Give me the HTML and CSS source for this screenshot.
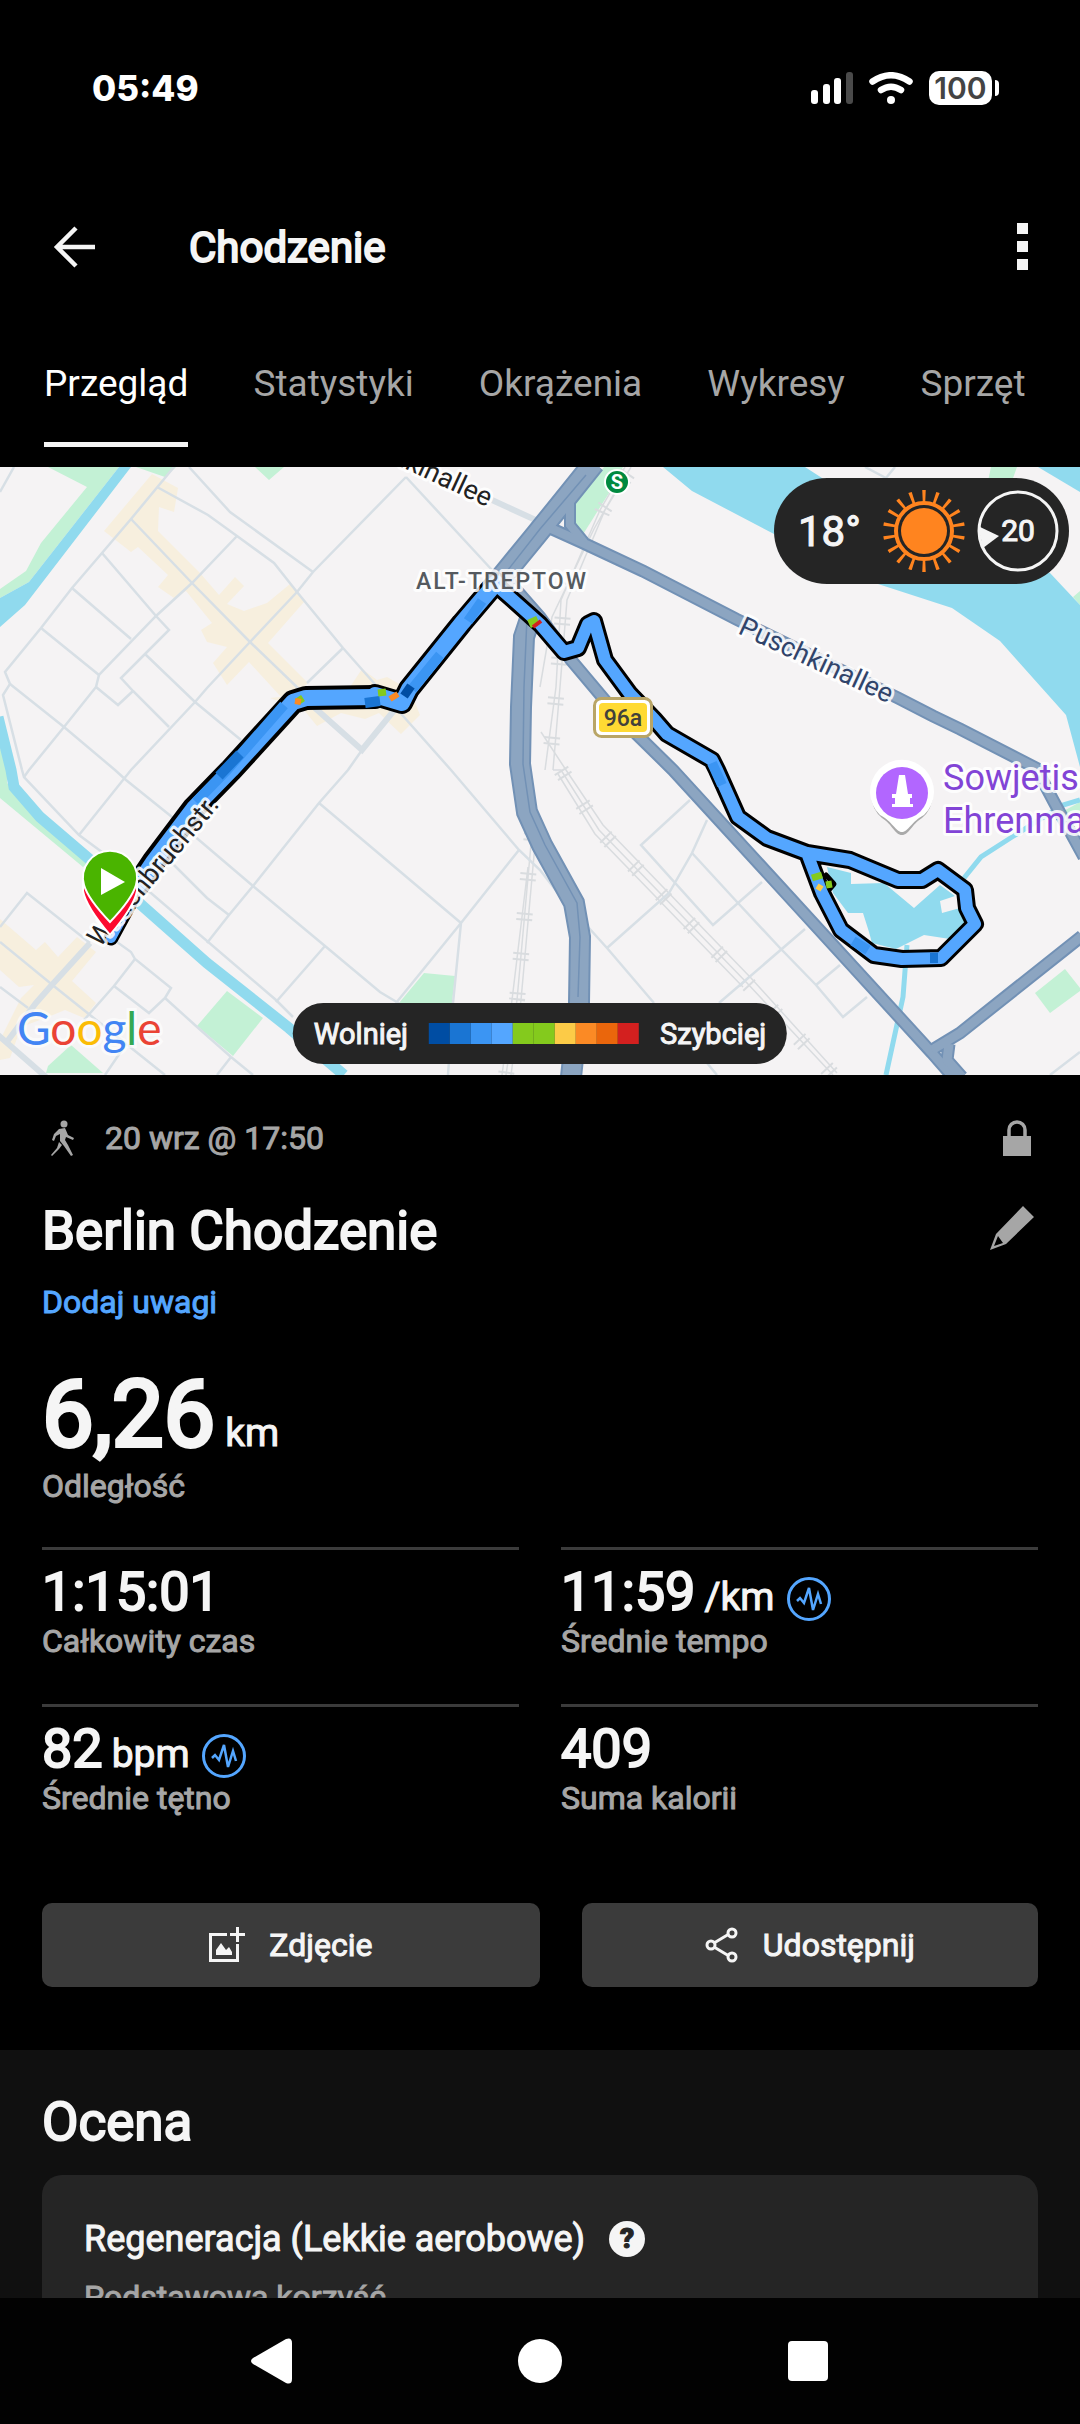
FILE: index.html
```html
<!DOCTYPE html>
<html lang="pl">
<head>
    <meta charset="UTF-8">
    <meta name="viewport" content="width=device-width, initial-scale=1.0">
    <title>Chodzenie</title>
    <link rel="stylesheet" href="styles.css">
</head>
<body>
    <div class="statusbar">
        <span class="clock">05:49</span>
        <div class="status-icons">
            <svg width="42" height="32" viewBox="0 0 42 32">
                <rect x="0" y="18" width="7" height="14" rx="3" fill="#fff"/>
                <rect x="12" y="12" width="7" height="20" rx="3" fill="#fff"/>
                <rect x="23" y="6" width="7" height="26" rx="3" fill="#fff"/>
                <rect x="35" y="0" width="7" height="32" rx="3" fill="#4a4a4a"/>
            </svg>
            <svg width="44" height="32" viewBox="0 0 44 32" fill="none" stroke="#fff" stroke-linecap="round">
                <path d="M3.500 9.500Q22 -3 40.500 9.500" stroke-width="6.500"/>
                <path d="M12 18Q22 11.500 32 18" stroke-width="6.500"/>
                <circle cx="22" cy="28" r="4" fill="#fff" stroke="none"/>
            </svg>
            <div class="battery">100</div>
        </div>
    </div>

    <header class="appbar">
        <button class="icon-button" aria-label="Wstecz">
            <svg width="42" height="42" viewBox="0 0 42 42" fill="none" stroke="#f5f5f5" stroke-width="4.500">
                <path d="M42 21H4M23 2L4 21L23 40"/>
            </svg>
        </button>
        <h1 class="appbar-title">Chodzenie</h1>
        <button class="icon-button" aria-label="Więcej">
            <svg width="12" height="48" viewBox="0 0 12 48" fill="#f5f5f5">
                <path d="M0 0h11v11H0zM0 18h11v11H0zM0 36h11v11H0z"/>
            </svg>
        </button>
    </header>

    <nav class="tabs">
        <a class="tab active" href="#przeglad">Przegląd</a>
        <a class="tab" href="#statystyki">Statystyki</a>
        <a class="tab" href="#okrazenia">Okrążenia</a>
        <a class="tab" href="#wykresy">Wykresy</a>
        <a class="tab" href="#sprzet">Sprzęt</a>
    </nav>

    <main class="content">
        <div class="map">
            <svg class="map-canvas" viewBox="0 0 1080 608">
                <rect width="1080" height="608" fill="#f5f3f4"/>

                <!-- parks -->
                <g fill="#c3f1d5">
                    <path d="M48 0L87 20L41 76L26 104L0 122V131L29 115L119 0Z"/>
                    <path d="M136 0L165 10L176 0ZM255 0L269 13L284 0Z"/>
                    <path d="M604 0H623L609 26L582 69L574 56L576 36Z"/>
                    <path d="M991 0H1017L1012 14H988ZM1080 124L1073 130L1080 138Z"/>
                    <path d="M0 280L7 303V316L21 330L45 353L88 396L83 400L0 331Z"/>
                    <path d="M227 524L263 551L233 589L197 559Z"/>
                    <path d="M424 506L455 509L452 536H399Z"/>
                    <path d="M71 578L103 606H46L48 599Z"/>
                    <path d="M1080 335L1060 346H1080ZM1065 502L1080 521V524L1050 546L1035 526Z"/>
                </g>

                <!-- built-up areas -->
                <g fill="#f7efde">
                    <path d="M152 7L178 21L174 45L159 40L158 64L200 106L219 128L235 110L244 119L227 137L244 144L267 136L290 117L304 135L268 176L308 216L300 223L282 231L249 195L227 218L213 196L227 180L207 175L201 163L212 156L186 124L174 131L158 120L168 108L138 80L131 85L104 64Z"/>
                    <path d="M362 202L377 213L387 210L410 223L420 248L401 267L379 246L365 252L341 246L317 259L304 243L270 231L348 223Z"/>
                    <path d="M0 452L36 483L45 475L58 490L77 470L96 485L72 514L96 536L84 551L65 543L48 550L21 560L10 591L0 593V573L21 531L34 518L19 520L0 503Z"/>
                </g>

                <!-- water -->
                <g fill="#90daee">
                    <path d="M119 0H131L25 138L0 160V131L29 115Z"/>
                    <path d="M663 0L692 24L774 67L878 117L952 141L1000 174L1066 248L1080 300V138L1050 106L822 11L805 0Z"/>
                    <path d="M1038 0L1080 25V0Z"/>
                    <path d="M827 400L851 406V417L884 416L914 441L940 418L955 429L940 434L942 446L960 441L965 456L950 472L924 468L896 482L872 476L869 465L863 446H848L833 426Z"/>
                </g>
                <g fill="none" stroke="#90daee">
                    <path stroke-width="11" d="M-2 250L11 303L14 320L40 350L88 391L138 435L207 496L289 561L344 608"/>
                    <path stroke-width="5" d="M907 478L903 530L886 608M1080 333L1063 338L1012 370L981 390L964 411"/>
                </g>

                <!-- railway -->
                <g fill="none" stroke="#d9dcdf">
                    <g stroke-width="1.500">
                        <path d="M631 0L605 43L567 133L560 220L553 303M625 0L600 43L561 133L556 220L545 303M619 18L594 62L552 150L540 220"/>
                        <path d="M553 303L561 303L599 363L747 516L833 608M541 265L566 303L603 358L751 511L837 606M558 307L595 367L743 520"/>
                        <path d="M532 366L517 533L506 608M536 366L521 533L511 608M528 400L512 533L502 608"/>
                    </g>
                    <g stroke-width="16" stroke-dasharray="2 4 2 32">
                        <path d="M628 6L603 43L564 133L557 220L549 303"/>
                        <path d="M561 303L599 363L747 516L833 608"/>
                        <path d="M532 366L517 533L506 608"/>
                    </g>
                </g>

                <!-- streets -->
                <g fill="none" stroke="#d7dfe5" stroke-width="2.500">
                    <path d="M174 0L131 52L102 86L72 121L41 161L5 205L10 217L3 228L22 303L24 310L79 368L110 391L276 533L293 550"/>
                    <path d="M157 20L208 48L237 69L274 96L297 125L343 181L396 241L451 303L519 383L540 403L561 430L607 481L654 536"/>
                    <path d="M189 0L230 45L313 105M406 10L313 105L297 125L250 175L207 221L195 235L131 303L79 368M406 10L492 103"/>
                    <path d="M131 52L192 116L250 175L300 223M237 69L192 116L156 149L99 208L96 220L64 260L29 303L24 310"/>
                    <path d="M102 86L156 149L169 163L145 187L121 211L133 224L169 260M72 121L131 172M41 161L99 208M96 220L118 238L133 224"/>
                    <path d="M10 217L64 260L115 303L126 313L172 350L253 419L325 479L380 525L400 537M145 187L195 235L241 273M343 181L307 216"/>
                    <path d="M362 283L348 303L319 336L253 419L229 448L207 476M14 0L0 25M172 396L207 431L229 448"/>
                    <path d="M319 336L461 456M519 383L461 456L396 536M461 456L453 536L448 608M325 479L276 535"/>
                    <path d="M0 460L27 426L90 476M110 470L131 485L135 492L171 521L165 531L149 546L114 519L135 492M114 519L84 553"/>
                    <path d="M165 531L196 559L231 590L253 608M231 590L217 608M0 475L55 520L90 548L165 608M0 520L28 541M124 580L105 608"/>
                    <path d="M865 0L886 11L895 0M690 333L641 378L713 458L762 415M707 353L692 386L669 426L607 481"/>
                    <path d="M692 386L738 436L781 482L816 518L843 550L867 530M805 462L719 536M840 498L816 518M707 596L717 608M1050 608L1080 585"/>
                </g>
                <g fill="none" stroke="#d7dfe5" stroke-width="6">
                    <path d="M315 241L362 283L396 241M492 33L540 55M90 476L50 520L36 536L6 576M-2 568L46 610"/>
                </g>

                <!-- main roads: casing first, then fill -->
                <g fill="none" stroke="#7291b5">
                    <path stroke-width="13" d="M550 61L581 75L643 104L736 152L898 231L933 249L960 262L1036 301L1054 335L1084 390"/>
                    <path stroke-width="13" d="M505 110L540 150L571 193L619 250L673 303L932 586L953 610"/>
                    <path stroke-width="13" d="M1082 469L960 566L932 583M949 577L947 593L962 610"/>
                    <path stroke-width="23" d="M594 -4L570 26L536 68L500 112"/>
                    <path stroke-width="22" d="M533 143L524 170L521 240L520 297L527 345L542 378L574 436L580 470L579 536L571 610"/>
                    <path stroke-width="12" d="M570 30V58L584 75"/>
                </g>
                <g fill="none" stroke="#8ca5c1">
                    <path stroke-width="9" d="M550 61L581 75L643 104L736 152L898 231L933 249L960 262L1036 301L1054 335L1084 390"/>
                    <path stroke-width="9" d="M505 110L540 150L571 193L619 250L673 303L932 586L953 610"/>
                    <path stroke-width="9" d="M1082 469L960 566L932 583M949 577L947 593L962 610"/>
                    <path stroke-width="19" d="M594 -4L570 26L536 68L500 112"/>
                    <path stroke-width="18" d="M533 143L524 170L521 240L520 297L527 345L542 378L574 436L580 470L579 536L571 610"/>
                    <path stroke-width="8" d="M570 30V58L584 75"/>
                </g>
                <path d="M586 8L540 62L504 108M527 150L524 220L523 297L530 345L545 378L577 436L580 470L578 530" fill="none" stroke="#7291b5" stroke-width="1.500"/>

                <!-- recorded track -->
                <g fill="none" stroke-linejoin="round" stroke-linecap="round">
                    <path stroke="#000" stroke-width="15" d="M111 471L130 436"/>
                    <path stroke="#000" stroke-width="24" d="M138 418L154 394L194 341L231 303L293 235L306 231L375 230"/>
                    <path stroke="#000" stroke-width="22" d="M375 228L402 236L409 222L462 156L496 116"/>
                    <path stroke="#000" stroke-width="18" d="M496 118L512 132L540 157L564 185L578 181L588 157L594 154L605 193L630 227L654 252L667 267L712 293L717 303L738 350L767 371L807 386L850 393L898 413H922L938 403L965 423L967 441L975 457L941 491L902 492L874 488L841 463L822 426L807 386"/>
                    <path stroke="#000" stroke-width="5" d="M826 408L834 417L828 424"/>
                    <path stroke="#54a6ff" stroke-width="10" d="M111 471L130 436"/>
                    <path stroke="#54a6ff" stroke-width="16" d="M138 418L154 394L194 341L231 303L293 235L306 231L375 230"/>
                    <path stroke="#54a6ff" stroke-width="16" d="M375 228L402 236L409 222L462 156L496 116"/>
                    <path stroke="#54a6ff" stroke-width="12" d="M496 118L512 132L540 157L564 185L578 181L588 157L594 154L605 193L630 227L654 252L667 267L712 293L717 303L738 350L767 371L807 386L850 393L898 413H922L938 403L965 423L967 441L975 457L941 491L902 492L874 488L841 463L822 426L807 386"/>
                </g>
                <g fill="none">
                    <path stroke="#3b95f3" stroke-width="10" d="M196 335L227 303L284 238M412 222L440 188M468 154L482 134M712 296L722 318M853 474L868 483"/>
                    <path stroke="#1a75d3" stroke-width="10" d="M219 309L240 287M365 236L380 234M930 491L938 491"/>
                    <path stroke="#004da3" stroke-width="9" d="M404 229L411 219"/>
                    <path stroke="#84ca1d" stroke-width="7" d="M378 226L386 225M297 235L303 231M812 411L822 408M826 418L832 417"/>
                    <path stroke="#84ca1d" stroke-width="9" d="M529 157L538 153"/>
                    <path stroke="#fb8a25" stroke-width="6" d="M390 232L398 227M295 234L301 235"/>
                    <path stroke="#d3201f" stroke-width="4" d="M533 160L541 154"/>
                    <path stroke="#fccb47" stroke-width="6" d="M817 419L822 422"/>
                </g>

                <!-- labels -->
                <g class="map-label">
                    <text transform="translate(737 166) rotate(25)" font-size="27" fill="#30446b">Puschkinallee</text>
                    <text transform="translate(487 40) rotate(25)" font-size="27" fill="#222" text-anchor="end">Puschkinallee</text>
                    <text transform="translate(220 338) rotate(-50)" font-size="27" fill="#222" text-anchor="end">Wildenbruchstr.</text>
                    <text class="district" x="416" y="122" font-size="23" fill="#555a5f">ALT-TREPTOW</text>
                    <text x="943" y="323" font-size="36" fill="#8244d6">Sowjetisches</text>
                    <text x="943" y="366" font-size="36" fill="#8244d6">Ehrenmal</text>
                </g>

                <g>
                    <rect x="594.500" y="231.500" width="57" height="38" rx="7" fill="#fff" stroke="#b9a566" stroke-width="3"/>
                    <rect x="599" y="236" width="48" height="29" rx="4" fill="#ffda33"/>
                    <text class="sign" x="623" y="259" font-size="23" fill="#42413b" text-anchor="middle">96a</text>
                </g>
                <g>
                    <circle cx="617" cy="15" r="13" fill="#fff"/>
                    <circle cx="617" cy="15" r="11" fill="#00893f"/>
                    <text class="sbahn" x="617" y="22" font-size="20" fill="#fff" text-anchor="middle">S</text>
                </g>

                <!-- memorial pin -->
                <path d="M902 368C895 368 892 357 882 351A31 31 0 1 1 922 351C912 357 909 368 902 368Z" fill="#aaa"/>
                <path d="M902 365C896 365 892 354 880 348A32 32 0 1 1 924 348C912 354 908 365 902 365Z" fill="#fff"/>
                <circle cx="902" cy="326" r="26" fill="#b266ff"/>
                <path d="M899 308H905L908 327H912V331H910V337H913V340H892V337H895V331H892V327H896Z" fill="#fff"/>

                <!-- stop and start pins -->
                <path d="M110 468Q86 440 83 424V415H137V424Q134 440 110 468Z" fill="#fc0a30" stroke="#fff" stroke-width="2"/>
                <path d="M110 455Q88 432 84 418A27 27 0 1 1 136 418Q132 432 110 455Z" fill="#4ab400" stroke="#fff" stroke-width="2"/>
                <path d="M101 401L125 415L101 428Z" fill="#fff"/>

                <text class="logo" x="17" y="578" font-size="46"><tspan fill="#4285f4">G</tspan><tspan fill="#ea4335">o</tspan><tspan fill="#fbbc05">o</tspan><tspan fill="#4285f4">g</tspan><tspan fill="#34a853">l</tspan><tspan fill="#ea4335">e</tspan></text>
            </svg>

            <div class="weather">
                <span class="temperature">18°</span>
                <svg width="82" height="82" viewBox="-41 -41 82 82" fill="none" stroke="#ff841f">
                    <circle r="23" fill="#ff841f" stroke="none"/>
                    <circle r="28" stroke-width="4"/>
                    <circle r="35" stroke-width="12" pathLength="180" stroke-dasharray="2.500 7.500" stroke-dashoffset="6.250"/>
                </svg>
                <div class="wind">
                    <svg width="82" height="82" viewBox="0 0 82 82">
                        <circle cx="41" cy="41" r="39" fill="none" stroke="#f5f5f5" stroke-width="3"/>
                        <path d="M1 36L22 46L6 58Z" fill="#f5f5f5"/>
                    </svg>
                    <span class="wind-speed">20</span>
                </div>
            </div>

            <div class="legend">
                <span>Wolniej</span>
                <div class="legend-scale">
                    <i class="pace-1"></i><i class="pace-2"></i><i class="pace-3"></i><i class="pace-4"></i><i class="pace-5"></i><i class="pace-5"></i><i class="pace-6"></i><i class="pace-7"></i><i class="pace-8"></i><i class="pace-9"></i>
                </div>
                <span>Szybciej</span>
            </div>
        </div>

        <section class="summary">
            <div class="meta">
                <svg width="24" height="36" viewBox="0 0 24 36" fill="#a6a6a6">
                    <circle cx="13" cy="4" r="3.500"/>
                    <path d="M8 9L14 8L17 15L23 18L22 20L15 17L14 20L17 25L22 35L20 36L13 26L9 21L9 14L5 16L3 21L1 20L3 14Z"/>
                    <path d="M8 22L11 25L8 29L1 36L0 35L6 28Z"/>
                </svg>
                <span class="date">20 wrz @ 17:50</span>
                <svg class="lock" width="28" height="36" viewBox="0 0 28 36">
                    <path d="M6 18V10a8 8 0 0 1 16 0V18" fill="none" stroke="#a6a6a6" stroke-width="3.500"/>
                    <rect y="16" width="28" height="20" fill="#a6a6a6"/>
                </svg>
            </div>

            <div class="title-row">
                <h2 class="title">Berlin Chodzenie</h2>
                <button class="icon-button" aria-label="Edytuj">
                    <svg width="44" height="50" viewBox="0 0 44 50" fill="#a6a6a6">
                        <path d="M33 0L44 11L16 38L0 44L6 28ZM8 30L4 40L13 37Z" fill-rule="evenodd"/>
                    </svg>
                </button>
            </div>
            <a class="notes" href="#uwagi">Dodaj uwagi</a>

            <div class="distance">
                <span class="big">6,26</span>
                <span class="unit">km</span>
            </div>
            <div class="label">Odległość</div>

            <div class="stats">
                <div class="stat">
                    <div class="value">1:15:01</div>
                    <div class="label">Całkowity czas</div>
                </div>
                <div class="stat">
                    <div class="value">11:59 <span class="unit">/km</span>
                        <svg class="pulse" width="44" height="44" viewBox="0 0 44 44" fill="none" stroke="#54a6ff"><circle cx="22" cy="22" r="20.500" stroke-width="3"/><path d="M10 24L13 21L17 26L22 11L26 33L31 17L34 27" stroke-width="2.500"/></svg>
                    </div>
                    <div class="label">Średnie tempo</div>
                </div>
                <div class="stat">
                    <div class="value">82 <span class="unit">bpm</span>
                        <svg class="pulse" width="44" height="44" viewBox="0 0 44 44" fill="none" stroke="#54a6ff"><circle cx="22" cy="22" r="20.500" stroke-width="3"/><path d="M10 24L13 21L17 26L22 11L26 33L31 17L34 27" stroke-width="2.500"/></svg>
                    </div>
                    <div class="label">Średnie tętno</div>
                </div>
                <div class="stat">
                    <div class="value">409</div>
                    <div class="label">Suma kalorii</div>
                </div>
            </div>

            <div class="actions">
                <button class="action">
                    <svg width="36" height="36" viewBox="0 0 36 36" fill="#f5f5f5">
                        <path d="M0 6H18V9H3V32H27V17H30V35H0Z"/>
                        <path d="M27 0H30V6H36V9H30V15H27V9H21V6H27Z"/>
                        <path d="M7 28V23L12 16L17 23L20 20L23 25V28Z"/>
                    </svg>
                    Zdjęcie
                </button>
                <button class="action">
                    <svg width="34" height="36" viewBox="0 0 34 36" fill="none" stroke="#f5f5f5" stroke-width="3">
                        <path d="M9 16L24 7M9 20L24 29"/>
                        <circle cx="6" cy="18" r="4"/><circle cx="27" cy="6" r="4"/><circle cx="27" cy="30" r="4"/>
                    </svg>
                    Udostępnij
                </button>
            </div>
        </section>

        <section class="rating">
            <h2 class="title">Ocena</h2>
            <div class="card">
                <div class="card-title">
                    <h3>Regeneracja (Lekkie aerobowe)</h3>
                    <button class="help" aria-label="Pomoc">?</button>
                </div>
                <div class="label">Podstawowa korzyść</div>
            </div>
        </section>
    </main>

    <footer class="navbar">
        <button class="icon-button" aria-label="Cofnij">
            <svg width="46" height="46" viewBox="0 0 46 46" fill="#fff"><path d="M4 20L37 1Q43 -1 43 5V41Q43 47 37 45L4 26Q0 23 4 20Z"/></svg>
        </button>
        <button class="icon-button" aria-label="Ekran główny">
            <svg width="46" height="46" viewBox="0 0 46 46" fill="#fff"><circle cx="23" cy="23" r="22"/></svg>
        </button>
        <button class="icon-button" aria-label="Ostatnie">
            <svg width="46" height="46" viewBox="0 0 46 46" fill="#fff"><rect x="3" y="3" width="40" height="40" rx="4"/></svg>
        </button>
    </footer>
</body>
</html>
```
FILE: styles.css
```css
* {
    box-sizing: border-box;
}

body {
    margin: 0;
    height: 100vh;
    display: flex;
    flex-direction: column;
    background-color: #000;
    color: #f5f5f5;
    font-family: Roboto, "Noto Sans", sans-serif;
    overflow: hidden;
}

h1, h2, h3 {
    margin: 0;
    font-weight: 400;
}

svg {
    display: block;
    flex-shrink: 0;
}

button {
    border: none;
    padding: 0;
    color: inherit;
    font: inherit;
    cursor: pointer;
}

a {
    text-decoration: none;
}

/* thickened regular weight */
.appbar-title,
.legend,
.temperature,
.wind-speed,
.meta,
.title,
.notes,
.label,
.value,
.unit,
.action,
.card-title {
    -webkit-text-stroke: 1px currentColor;
}

.icon-button {
    background: none;
}

.statusbar {
    display: flex;
    align-items: center;
    justify-content: space-between;
    height: 176px;
    padding: 0 80px 0 92px;
    flex-shrink: 0;
}

.clock {
    font-family: Inter, sans-serif;
    font-size: 35px;
    font-weight: 800;
    color: #fff;
}

.status-icons {
    display: flex;
    align-items: center;
    gap: 16px;
}

.battery {
    position: relative;
    width: 63px;
    height: 34px;
    margin-right: 8px;
    border-radius: 10px;
    background-color: #fff;
    color: #444;
    font-family: Inter, sans-serif;
    font-size: 30px;
    font-weight: 600;
    line-height: 34px;
    text-align: center;
}

.battery::after {
    content: "";
    position: absolute;
    right: -7px;
    top: 9px;
    width: 4px;
    height: 16px;
    border-radius: 0 4px 4px 0;
    background-color: #fff;
}

.appbar {
    display: flex;
    align-items: center;
    height: 142px;
    padding: 0 51px 0 53px;
    flex-shrink: 0;
}

.appbar-title {
    flex: 1;
    padding-left: 94px;
    font-size: 42px;
    -webkit-text-stroke-width: 2px;
}

.tabs {
    display: flex;
    justify-content: space-between;
    height: 149px;
    padding: 32px 44px 0;
    flex-shrink: 0;
}

.tab {
    min-width: 126px;
    height: 97px;
    color: #a6a6a6;
    font-size: 37px;
    line-height: 68px;
    text-align: center;
}

.tab.active {
    color: #fff;
    border-bottom: 5px solid #f5f5f5;
}

.content {
    flex: 1;
    min-height: 0;
    overflow: hidden;
}

.map {
    position: relative;
}

.map-canvas {
    width: 100%;
    height: auto;
}

.map-label text {
    paint-order: stroke;
    stroke: #fff;
    stroke-opacity: 0.85;
    stroke-width: 6px;
    stroke-linejoin: round;
}

.district {
    letter-spacing: 2px;
    font-weight: 500;
}

.sign {
    font-weight: 500;
}

.sbahn {
    font-weight: 700;
}

.logo {
    font-family: Lato, sans-serif;
    paint-order: stroke;
    stroke: #fff;
    stroke-opacity: 0.6;
    stroke-width: 6px;
}

.weather {
    position: absolute;
    top: 11px;
    right: 11px;
    display: flex;
    align-items: center;
    gap: 12px;
    width: 295px;
    height: 106px;
    padding: 0 10px 0 24px;
    border-radius: 53px;
    background-color: #252525;
}

.temperature {
    flex: 1;
    font-size: 42px;
}

.wind {
    position: relative;
}

.wind-speed {
    position: absolute;
    inset: 0;
    font-size: 30px;
    line-height: 82px;
    text-align: center;
}

.legend {
    position: absolute;
    bottom: 11px;
    left: 50%;
    transform: translateX(-50%);
    display: flex;
    align-items: center;
    gap: 21px;
    height: 61px;
    padding: 0 21px;
    border-radius: 31px;
    background-color: #252525;
    font-size: 29px;
}

.legend-scale {
    display: flex;
}

.legend-scale i {
    width: 21px;
    height: 21px;
}

.pace-1 { background-color: #004da3; }
.pace-2 { background-color: #1a75d3; }
.pace-3 { background-color: #3b95f3; }
.pace-4 { background-color: #54a6ff; }
.pace-5 { background-color: #84ca1d; }
.pace-6 { background-color: #fccb47; }
.pace-7 { background-color: #fb8a25; }
.pace-8 { background-color: #ea660c; }
.pace-9 { background-color: #d3201f; }

.summary {
    padding: 42px 42px 63px;
}

.meta {
    display: flex;
    align-items: center;
    height: 42px;
    padding: 0 7px 0 9px;
    color: #a6a6a6;
    font-size: 32px;
}

.date {
    padding-left: 30px;
}

.lock {
    margin-left: auto;
}

.title-row {
    display: flex;
    align-items: center;
    justify-content: space-between;
    padding-right: 4px;
    margin-top: 36px;
}

.title {
    font-size: 53px;
    line-height: 72px;
    -webkit-text-stroke-width: 2px;
}

.notes {
    display: block;
    margin-top: 15px;
    color: #54a6ff;
    font-size: 32px;
    line-height: 40px;
}

.distance {
    display: flex;
    align-items: baseline;
    gap: 10px;
    height: 106px;
    margin-top: 38px;
}

.big {
    font-size: 92px;
    line-height: 110px;
    -webkit-text-stroke: 4px currentColor;
}

.unit {
    font-size: 39px;
}

.label {
    color: #a6a6a6;
    font-size: 32px;
    line-height: 40px;
}

.stats {
    display: grid;
    grid-template-columns: 1fr 1fr;
    column-gap: 42px;
    margin-top: 41px;
}

.stat {
    height: 157px;
    padding-top: 11px;
    border-top: 3px solid #3b3b3b;
}

.value {
    display: flex;
    align-items: baseline;
    height: 60px;
    font-size: 54px;
    line-height: 62px;
    -webkit-text-stroke-width: 2px;
}

.value .unit {
    padding-left: 9px;
    -webkit-text-stroke-width: 1px;
}

.pulse {
    margin-left: 12px;
    align-self: flex-end;
}

.actions {
    display: grid;
    grid-template-columns: 12fr 11fr;
    gap: 42px;
    margin-top: 42px;
}

.action {
    display: flex;
    align-items: center;
    justify-content: center;
    gap: 24px;
    height: 84px;
    border-radius: 10px;
    background-color: #3b3b3b;
    font-size: 32px;
}

.rating {
    padding: 36px 42px 0;
    background-color: #101010;
}

.card {
    margin-top: 17px;
    padding: 42px 42px 60px;
    border-radius: 20px;
    background-color: #252525;
}

.card-title {
    display: flex;
    align-items: center;
    gap: 24px;
    margin-bottom: 16px;
}

.card-title h3 {
    font-size: 36px;
    line-height: 44px;
}

.help {
    width: 36px;
    height: 36px;
    border-radius: 50%;
    background-color: #f5f5f5;
    color: #252525;
    font-size: 28px;
    font-weight: 900;
    line-height: 36px;
}

.navbar {
    display: flex;
    align-items: center;
    justify-content: center;
    gap: 222px;
    height: 126px;
    flex-shrink: 0;
    background-color: #020202;
}
```
